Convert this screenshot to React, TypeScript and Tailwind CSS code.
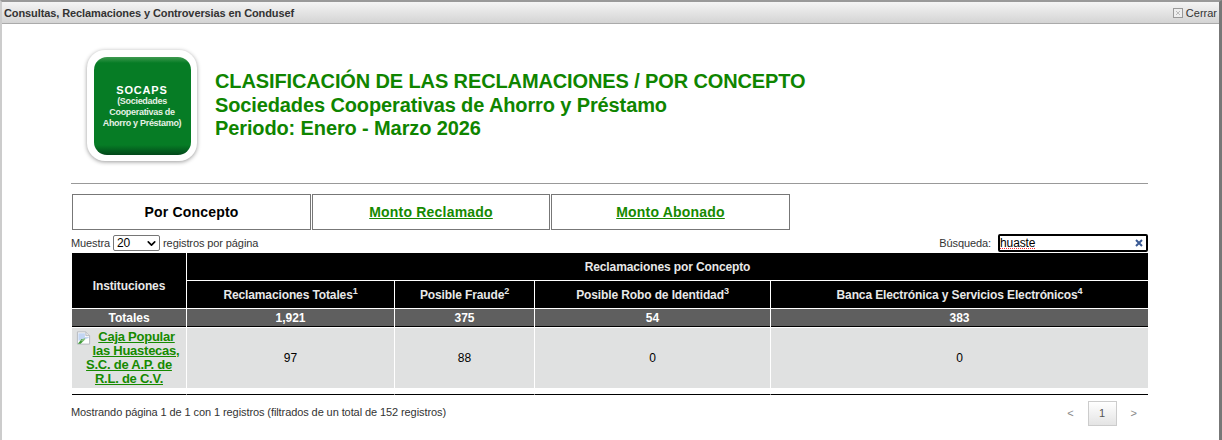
import { ChevronDown } from 'lucide-react';

const font = 'font-["Liberation_Sans",Arial,sans-serif]';

function BrokenImageIcon() {
  return (
    <svg className="mr-[7px] -mb-[2px] inline-block align-top" width="15" height="16" viewBox="0 0 16 16">
      <path d="M1.5 1.5h9l4 4v9h-13z" fill="#fff" stroke="#b4b8bd" />
      <path d="M10.5 1.5v4h4" fill="#e6e8ea" stroke="#b4b8bd" />
      <path d="M2.5 3h7v4h4v1l-6 2-5 1z" fill="#c3d6f3" />
      <path d="M2 14l4-5 3 1-4 4z" fill="#3f9a37" />
      <path d="M5 11l4-3 1 1-3 3z" fill="#8ac37f" />
    </svg>
  );
}

function SocapsLogo() {
  return (
    <div className="flex h-[111px] w-[110px] items-center justify-center rounded-[18px] bg-white shadow-[0_1px_4px_rgba(0,0,0,0.4)]">
      <div className="flex h-[98px] w-[97px] flex-col items-center justify-center rounded-[13px] bg-[linear-gradient(#3f9a50_0px,#067c25_6px,#067c25_88px,#02471a_98px)] pt-[1px] text-center text-white">
        <div className="pt-[1px] text-[11px] font-bold leading-[12px] tracking-[0.8px]">SOCAPS</div>
        <div className="text-[9px] font-bold leading-[11px] tracking-[-0.3px] text-[#e6f1e6]">(Sociedades</div>
        <div className="text-[9px] font-bold leading-[11px] tracking-[-0.3px] text-[#e6f1e6]">Cooperativas de</div>
        <div className="text-[9px] font-bold leading-[11px] tracking-[-0.3px] text-[#e6f1e6]">Ahorro y Préstamo)</div>
      </div>
    </div>
  );
}

function Tab({ label, active, className }: { label: string; active?: boolean; className: string }) {
  return (
    <div className={`${className} flex h-[36px] items-center justify-center border border-[#777] text-[14px] font-bold tracking-[0.2px]`}>
      {active ? (
        <span className="text-black">{label}</span>
      ) : (
        <a className="text-[#168a00] underline" href="#">
          {label}
        </a>
      )}
    </div>
  );
}

const headCell = 'border-r border-b border-white bg-black text-center font-bold tracking-[-0.12px] text-[#e8e8e8]';
const totalCell = 'border-r border-b border-white bg-[#5f5f5f] text-center font-bold text-white shadow-[inset_0_-1px_0_#000]';
const dataCell = 'border-r border-white bg-[#e0e1e1] text-center text-[12px] text-black';
const endCell = 'border-r border-b border-r-white border-b-black p-0';

export default function App() {
  return (
    <div className={`${font} h-[440px] w-[1222px] overflow-hidden bg-white`}>
      <div className="flex h-full flex-col border-t-2 border-r-[3px] border-l-2 border-t-[#999] border-r-[#777] border-l-[#ccc]">
        {/* Title bar */}
        <div className="flex h-[22px] shrink-0 items-center justify-between border-b border-[#aaa] bg-[linear-gradient(#f4f4f4,#d4d4d4)] pt-[1px] pr-[2px] pl-[2px] text-[11px]">
          <span className="font-bold tracking-[-0.1px] text-[#333]">Consultas, Reclamaciones y Controversias en Condusef</span>
          <span className="flex items-center gap-[3px] text-[#333]">
            <svg width="10" height="10" viewBox="0 0 10 10">
              <rect x="0.5" y="0.5" width="9" height="9" fill="#eee" stroke="#999" />
              <path d="M3 3l4 4M7 3l-4 4" stroke="#bbb" />
            </svg>
            Cerrar
          </span>
        </div>

        <div className="ml-[69px] w-[1077px]">
          {/* Heading */}
          <div className="flex h-[136px] pt-[26px] pl-[16px]">
            <SocapsLogo />
            <div className="ml-[18px] pt-[20px] text-[20px] font-bold leading-[23.5px] tracking-[-0.12px] text-[#0f8500]">
              <div>CLASIFICACIÓN DE LAS RECLAMACIONES / POR CONCEPTO</div>
              <div>Sociedades Cooperativas de Ahorro y Préstamo</div>
              <div>Periodo: Enero - Marzo 2026</div>
            </div>
          </div>
          <div className="mt-[23px] h-[1px] bg-[#999]" />

          {/* Tabs */}
          <div className="mt-[10px] ml-[1px] flex gap-[1px]">
            <Tab className="w-[239px]" label="Por Concepto" active />
            <Tab className="w-[238px]" label="Monto Reclamado" />
            <Tab className="w-[239px]" label="Monto Abonado" />
          </div>

          {/* Table controls */}
          <div className="mt-[4px] flex h-[18px] items-center justify-between text-[11px] tracking-[-0.1px] text-[#333]">
            <div className="flex items-center">
              Muestra
              <span className="relative mx-[3px] flex h-[16px] w-[47px] items-center rounded-[2px] border border-[#767676] pl-[3px] text-[12px] leading-none text-black">
                20
                <ChevronDown className="absolute top-[1px] right-[1px] size-[13px]" strokeWidth={3} />
              </span>
              registros por página
            </div>
            <div className="flex items-center">
              Búsqueda:
              <span className="ml-[7px] flex h-[18px] w-[150px] items-center justify-between rounded-[2px] border-2 border-black pr-[3px] text-[12px] leading-none text-black">
                <span className="underline decoration-red-500 decoration-dotted">huaste</span>
                <svg width="8" height="8" viewBox="0 0 8 8">
                  <path d="M1 1l6 6M7 1l-6 6" stroke="#3a5a94" strokeWidth="2" />
                </svg>
              </span>
            </div>
          </div>

          {/* Table */}
          <table className="mt-[1px] ml-[1px] w-[1076px] table-fixed border-separate border-spacing-0 text-[12px]">
            <colgroup>
              <col className="w-[115px]" />
              <col className="w-[208px]" />
              <col className="w-[140px]" />
              <col className="w-[236px]" />
              <col className="w-[377px]" />
            </colgroup>
            <thead>
              <tr className="h-[28px]">
                <th rowSpan={2} className={`${headCell} pt-[10px]`}>
                  Instituciones
                </th>
                <th colSpan={4} className={`${headCell} border-r-0`}>
                  Reclamaciones por Concepto
                </th>
              </tr>
              <tr className="h-[28px]">
                <th className={headCell}>
                  Reclamaciones Totales<sup>1</sup>
                </th>
                <th className={headCell}>
                  Posible Fraude<sup>2</sup>
                </th>
                <th className={headCell}>
                  Posible Robo de Identidad<sup>3</sup>
                </th>
                <th className={`${headCell} border-r-0`}>
                  Banca Electrónica y Servicios Electrónicos<sup>4</sup>
                </th>
              </tr>
              <tr className="h-[19px] leading-[17px]">
                <td className={totalCell}>Totales</td>
                <td className={totalCell}>1,921</td>
                <td className={totalCell}>375</td>
                <td className={totalCell}>54</td>
                <td className={`${totalCell} border-r-0`}>383</td>
              </tr>
            </thead>
            <tbody>
              <tr className="h-[60px]">
                <td className={`${dataCell} px-[3px]`}>
                  <a className="block text-[13px] font-bold leading-[14px] tracking-[-0.25px] text-[#168a00] underline" href="#">
                    <span className="block pr-[7px]">
                      <BrokenImageIcon />
                      Caja Popular
                    </span>
                    <span className="block pl-[14px]">las Huastecas,</span>
                    <span className="block">S.C. de A.P. de</span>
                    <span className="block">R.L. de C.V.</span>
                  </a>
                </td>
                <td className={dataCell}>97</td>
                <td className={dataCell}>88</td>
                <td className={dataCell}>0</td>
                <td className={`${dataCell} border-r-0`}>0</td>
              </tr>
              <tr className="h-[7px]">
                <td className={endCell} />
                <td className={endCell} />
                <td className={endCell} />
                <td className={endCell} />
                <td className={`${endCell} border-r-0`} />
              </tr>
            </tbody>
          </table>

          {/* Footer */}
          <div className="mt-[6px] flex items-center justify-between text-[11px] text-[#333]">
            <span className="mb-[3px] tracking-[-0.09px]">Mostrando página 1 de 1 con 1 registros (filtrados de un total de 152 registros)</span>
            <div className="flex items-center text-[#888]">
              <span>&lt;</span>
              <span className="mx-[14px] flex h-[25px] w-[29px] items-center justify-center border border-[#ccc] bg-[linear-gradient(#fff,#e4e4e4)] text-[11px] text-[#555]">1</span>
              <span className="mr-[11px]">&gt;</span>
            </div>
          </div>
        </div>
      </div>
    </div>
  );
}
